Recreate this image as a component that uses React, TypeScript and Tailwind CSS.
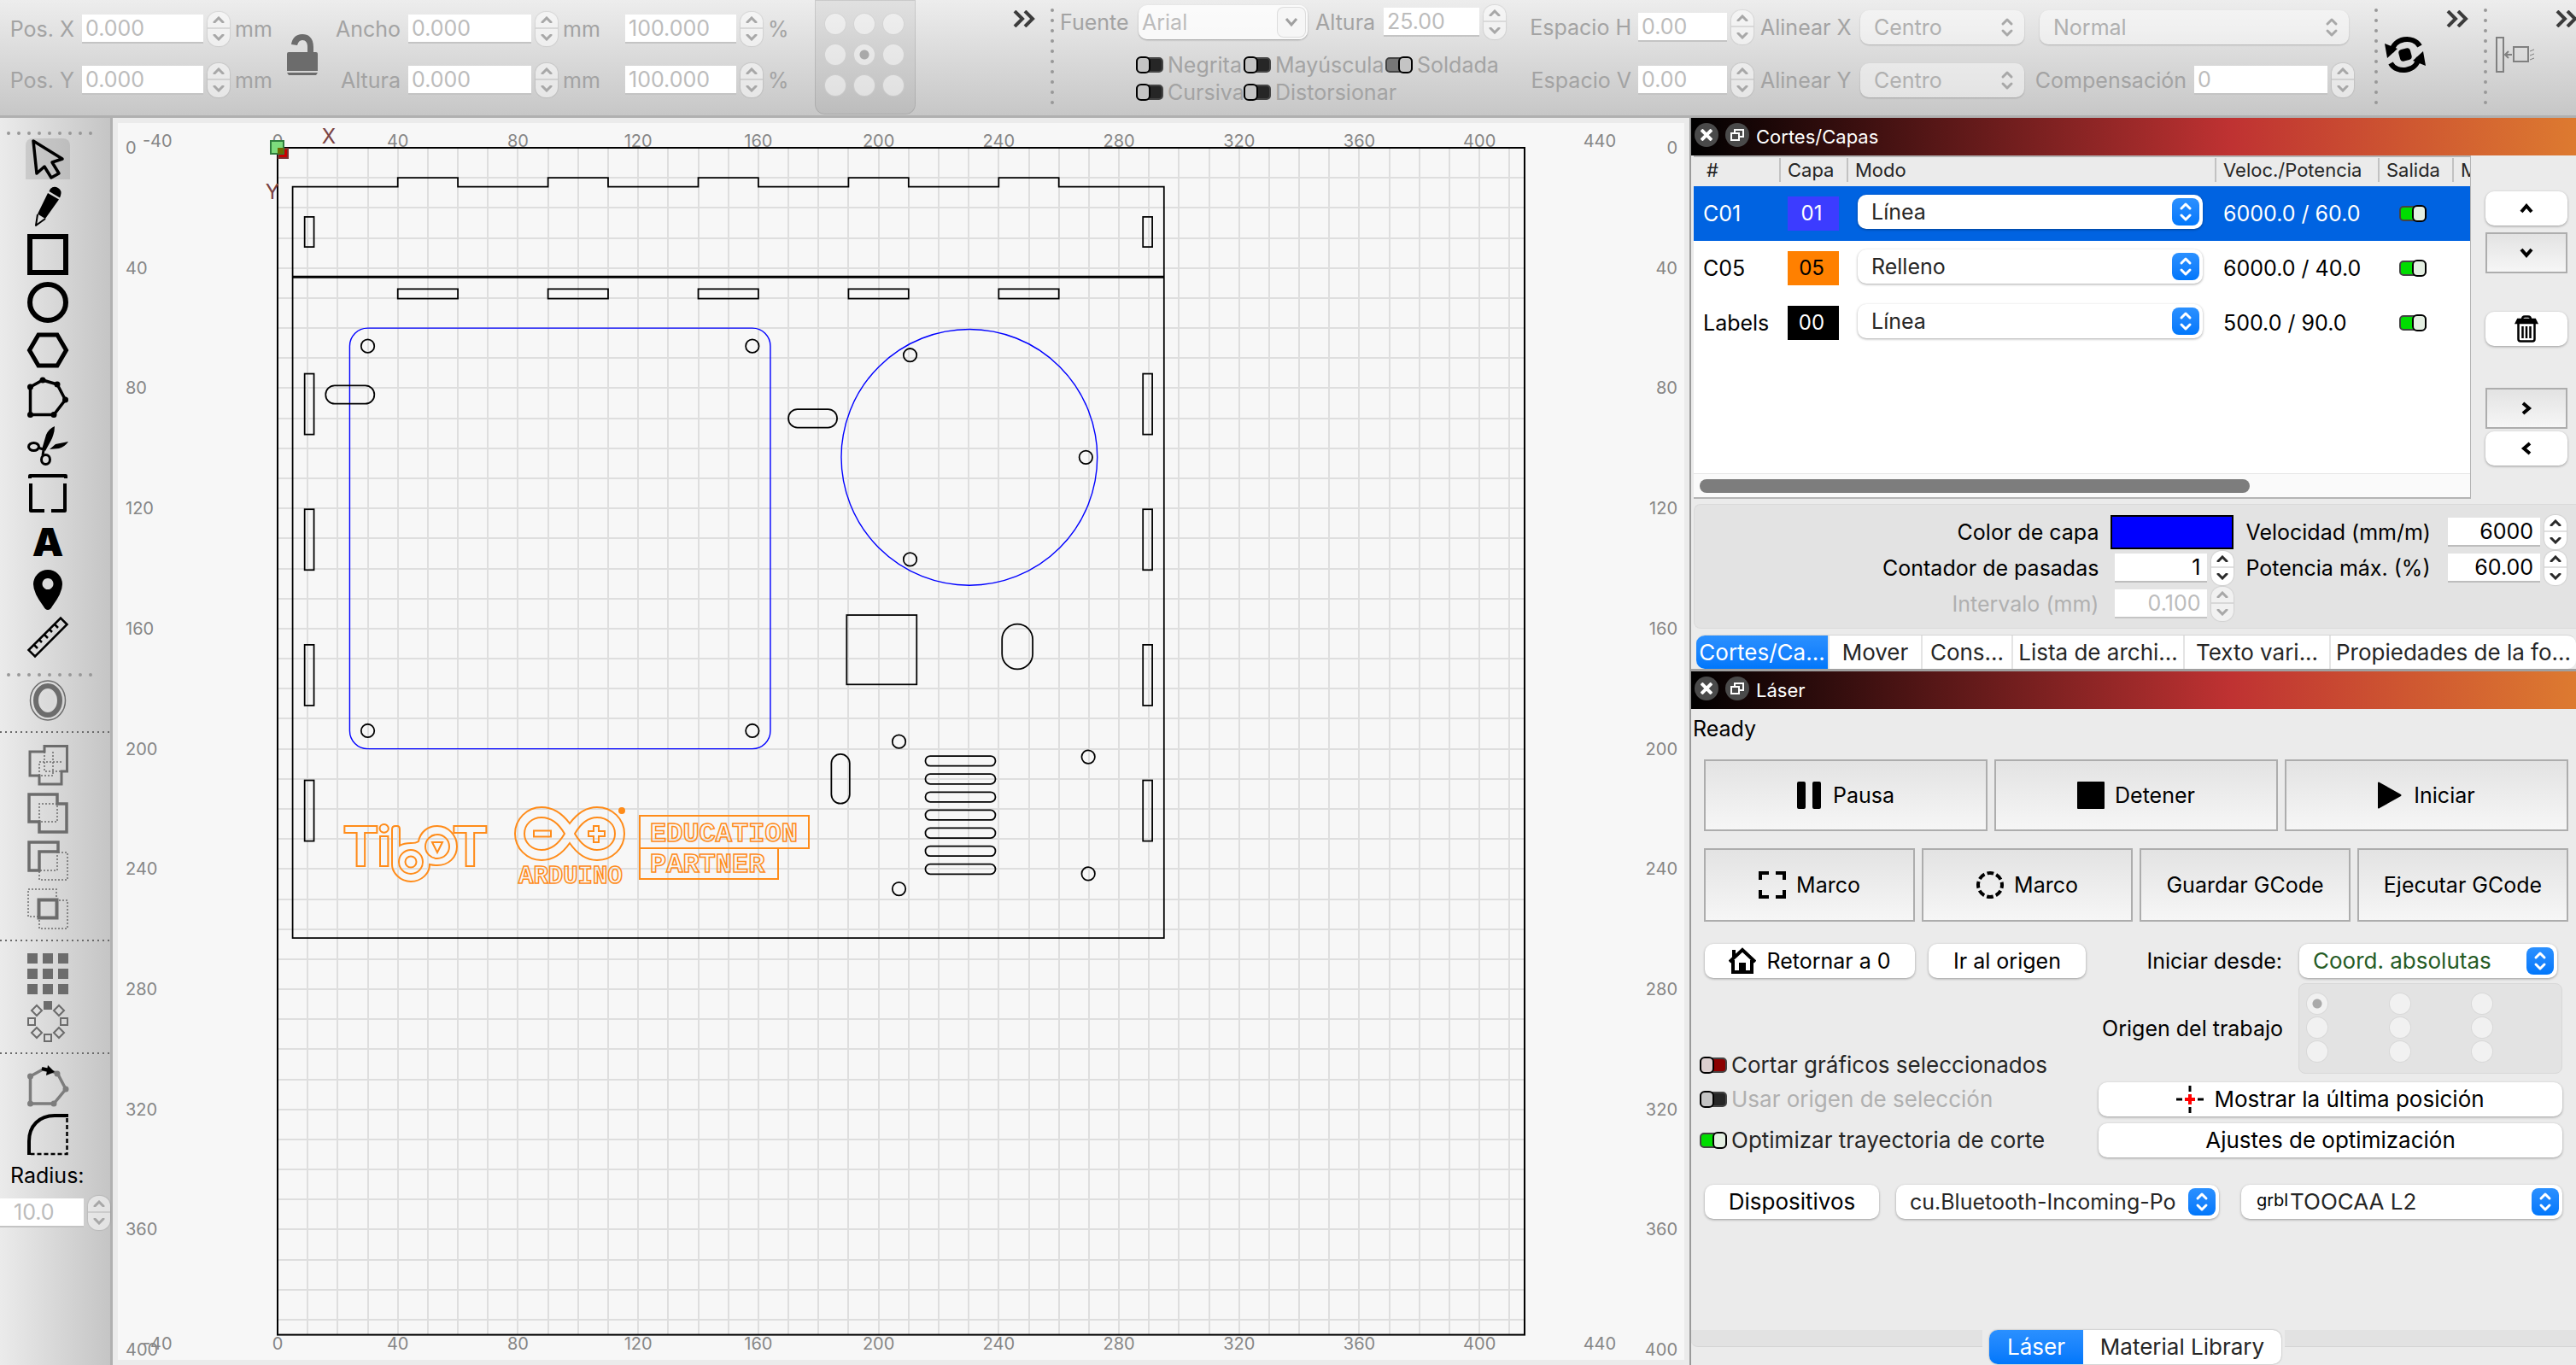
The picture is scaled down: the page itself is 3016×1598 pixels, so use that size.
import { useState } from 'react';
import type { ReactNode } from 'react';
import { clsx } from 'clsx';

interface Layer {
  id: string;
  code: string;
  swatch: string;
  mode: string;
  power: string;
}

const layers: Layer[] = [
  { id: 'C01', code: '01', swatch: 'bg-[#3c3cff] text-white', mode: 'Línea', power: '6000.0 / 60.0' },
  { id: 'C05', code: '05', swatch: 'bg-[#ff8000] text-black', mode: 'Relleno', power: '6000.0 / 40.0' },
  { id: 'Labels', code: '00', swatch: 'bg-black text-white', mode: 'Línea', power: '500.0 / 90.0' },
];

/* ---------- Small controls ---------- */

function Stepper({ disabled = false }: { disabled?: boolean }) {
  return (
    <span
      className={clsx(
        'flex h-10 w-[26px] shrink-0 flex-col divide-y-2 overflow-hidden rounded-xl shadow-[0_0_1px_1px_rgba(0,0,0,0.08)]',
        disabled ? 'divide-black/10 bg-white/50 text-[#a8a8a8]' : 'divide-[#e0e0e0] bg-white text-[#2b2b2b]'
      )}
    >
      <button type="button" aria-label="Subir" disabled={disabled} className="flex h-5 items-center justify-center">
        <svg className="h-2 w-3.5" viewBox="0 0 14 8" fill="none" stroke="currentColor" strokeWidth="3" strokeLinecap="round">
          <path d="M2 7 L7 2 L12 7" />
        </svg>
      </button>
      <button type="button" aria-label="Bajar" disabled={disabled} className="flex h-5 items-center justify-center">
        <svg className="h-2 w-3.5" viewBox="0 0 14 8" fill="none" stroke="currentColor" strokeWidth="3" strokeLinecap="round">
          <path d="M2 1 L7 6 L12 1" />
        </svg>
      </button>
    </span>
  );
}

interface NumberBoxProps {
  id?: string;
  name?: string;
  value: string;
  width: string;
  align?: string;
  disabled?: boolean;
}

function NumberBox({ id, name, value, width, align = 'pl-1', disabled = false }: NumberBoxProps) {
  return (
    <span className="flex shrink-0 items-center gap-[5px]">
      <input
        id={id}
        aria-label={name}
        defaultValue={value}
        disabled={disabled}
        className={clsx(
          'h-[34px] border-b-2 bg-white outline-none',
          disabled ? 'border-[#c4c4c4] text-[#bcbcbc]' : 'border-[#bdbdbd] text-black',
          width,
          align
        )}
      />
      <Stepper disabled={disabled} />
    </span>
  );
}

interface PopupProps {
  id?: string;
  name?: string;
  options: string[];
  width: string;
  tone?: string;
  pad?: string;
  disabled?: boolean;
}

function Popup({ id, name, options, width, tone = 'text-[#262626]', pad = 'pl-4 pr-10', disabled = false }: PopupProps) {
  return (
    <span className={clsx('relative block h-10 shrink-0', width)}>
      <select
        id={id}
        aria-label={name}
        disabled={disabled}
        className={clsx(
          'h-10 w-full appearance-none rounded-[10px] opacity-100 outline-none',
          disabled ? 'bg-white/45 text-[#b0b0b0] shadow-[0_1px_2px_rgba(0,0,0,0.2)]' : 'bg-white shadow-[0_1px_3px_rgba(0,0,0,0.35)]',
          !disabled && tone,
          pad
        )}
      >
        {options.map((o) => (
          <option key={o}>{o}</option>
        ))}
      </select>
      <span
        className={clsx(
          'pointer-events-none absolute top-1 right-1 flex h-8 w-8 items-center justify-center rounded-lg',
          disabled ? 'text-[#a8a8a8]' : 'bg-linear-to-b from-[#2a90ff] to-[#0077fb] text-white'
        )}
      >
        <svg className="h-6 w-4" viewBox="0 0 16 24" fill="none" stroke="currentColor" strokeWidth="3" strokeLinecap="round" strokeLinejoin="round">
          <path d="M3 8 L8 3 L13 8 M3 16 L8 21 L13 16" />
        </svg>
      </span>
    </span>
  );
}

function Toggle({ on = false, color }: { on?: boolean; color: string }) {
  return (
    <svg className="h-5 w-8 shrink-0" viewBox="0 0 32 20">
      <rect x="1" y="2" width="30" height="16" rx="4" fill={color} stroke="#444" strokeWidth="2" />
      <rect x={on ? 16 : 1} y="1" width="15" height="18" rx="5" fill={color === '#00dd00' ? '#e4efe2' : color === '#8b0000' ? '#dccfcf' : '#c4c4c4'} stroke="#000" strokeWidth="2" />
    </svg>
  );
}

interface SwitchProps {
  label: string;
  on?: boolean;
  color?: string;
  tone?: string;
  disabled?: boolean;
}

function Switch({ label, on = false, color = '#262626', tone = 'text-[#a3a3a3]', disabled = false }: SwitchProps) {
  return (
    <label className={clsx('flex items-center gap-[5px] overflow-hidden whitespace-nowrap leading-8', tone)}>
      <input type="checkbox" className="sr-only" defaultChecked={on} disabled={disabled} />
      <Toggle on={on} color={color} />
      {label}
    </label>
  );
}

function RadioGrid({ name, selected, className }: { name: string; selected: number; className: string }) {
  return (
    <div className={clsx('grid grid-cols-3', className)}>
      {Array.from({ length: 9 }, (_, i) => (
        <input
          key={i}
          type="radio"
          name={name}
          aria-label={`${name} ${i + 1}`}
          defaultChecked={i === selected}
          disabled
          className="h-[26px] w-[26px] appearance-none rounded-full border border-black/10 bg-white/50 checked:bg-[radial-gradient(circle,#a9a9a9_5px,transparent_6px)]"
        />
      ))}
    </div>
  );
}

function WhiteButton({ className, children, label }: { className: string; children: ReactNode; label?: string }) {
  return (
    <button
      type="button"
      aria-label={label}
      className={clsx('flex h-10 shrink-0 items-center justify-center rounded-[10px] bg-white whitespace-nowrap text-black shadow-[0_1px_3px_rgba(0,0,0,0.35)]', className)}
    >
      {children}
    </button>
  );
}

function BevelButton({ className, children, label }: { className?: string; children: ReactNode; label?: string }) {
  return (
    <button
      type="button"
      aria-label={label}
      className={clsx('flex items-center justify-center border-2 border-[#adadad] bg-linear-to-b from-[#e3e3e3] to-[#f6f6f6] whitespace-nowrap text-black', className)}
    >
      {children}
    </button>
  );
}

function Chevron({ d }: { d: string }) {
  return (
    <svg className="h-5 w-5" viewBox="0 0 20 20" fill="none" stroke="#000" strokeWidth="4">
      <path d={d} />
    </svg>
  );
}

function Overflow({ className }: { className?: string }) {
  return (
    <button type="button" aria-label="Más" className={clsx('h-5 w-7 shrink-0', className)}>
      <svg className="h-5 w-7" viewBox="0 0 28 20" fill="none" stroke="#3c3c3c" strokeWidth="4">
        <path d="M2 1 L11 10 L2 19 M14 1 L23 10 L14 19" />
      </svg>
    </button>
  );
}

function DotsV() {
  return (
    <svg className="mt-2 h-[120px] w-1 shrink-0" viewBox="0 0 4 120" stroke="#989898" strokeWidth="4" strokeLinecap="round">
      <path d="M2 4 V118" strokeDasharray="0 12" />
    </svg>
  );
}

/* ---------- Top toolbar ---------- */

function SizeRow({ pos, size }: { pos: string; size: string }) {
  return (
    <>
      <label htmlFor={pos} className="w-[76px] text-right">{pos}</label>
      <NumberBox id={pos} value="0.000" width="ml-[9px] w-[142px]" disabled />
      <span className="ml-1.5 w-[43px]">mm</span>
      <label htmlFor={size} className="ml-[61px] w-[90px] text-right">{size}</label>
      <NumberBox id={size} value="0.000" width="ml-[9px] w-[144px]" disabled />
      <span className="ml-1.5 w-[43px]">mm</span>
      <NumberBox name={`${size} %`} value="100.000" width="ml-[30px] w-[130px]" disabled />
      <span className="ml-1.5 w-[22px]">%</span>
    </>
  );
}

function TopBar() {
  return (
    <header className="flex h-[138px] shrink-0 items-start overflow-hidden border-b-3 border-[#b0b0b0] bg-linear-to-b from-[#ededed] to-[#c7c7c7] whitespace-nowrap text-[#a3a3a3]">
      <div className="relative flex shrink-0 flex-col gap-5 pt-3.5 pl-[11px]">
        <div className="flex h-10 items-center"><SizeRow pos="Pos. X" size="Ancho" /></div>
        <div className="flex h-10 items-center"><SizeRow pos="Pos. Y" size="Altura" /></div>
        <svg className="absolute top-10 left-[336px] h-12 w-9" viewBox="0 0 36 48" fill="#6c6c6c">
          <path d="M31 24 V15 C31 4 25 0 18 0 C10 0 6 5 5 12 L12 13 C13 9 15 7 18 7 C22 7 24 10 24 15 V24 Z" />
          <path d="M2 21 H34 Q36 21 36 23 V43 H0 V23 Q0 21 2 21 Z M0 45 H36 L34 48 H2 Z" />
        </svg>
      </div>
      <div className="ml-[33px] h-[134px] w-[118px] shrink-0 rounded-b-xl border border-black/10 bg-black/5 pt-3.5 pl-2.5">
        <RadioGrid name="Ancla" selected={4} className="w-[102px] gap-y-2.5" />
      </div>
      <Overflow className="mt-3 ml-[114px]" />
      <div className="ml-4"><DotsV /></div>

      <div className="ml-[7px] w-[522px] shrink-0 pt-1.5">
        <div className="flex h-10 items-center">
          <label htmlFor="fuente" className="w-[82px]">Fuente</label>
          <span className="relative ml-2.5 block h-10 w-[198px]">
            <input id="fuente" defaultValue="Arial" disabled className="h-10 w-full rounded-[10px] bg-white/80 pl-1 text-[#bcbcbc] shadow-[0_1px_2px_rgba(0,0,0,0.3)]" />
            <span className="absolute top-0.5 right-0.5 flex h-9 w-[34px] items-center justify-center rounded-lg border border-black/10 bg-[#f6f6f6]">
              <svg className="h-3 w-4" viewBox="0 0 16 12" fill="none" stroke="#a0a0a0" strokeWidth="3">
                <path d="M2 2 L8 9 L14 2" />
              </svg>
            </span>
          </span>
          <label htmlFor="altura-texto" className="ml-[9px] w-[72px]">Altura</label>
          <NumberBox id="altura-texto" value="25.00" width="ml-2 w-[112px]" disabled />
        </div>
        <div className="mt-3.5 ml-[89px] grid grid-cols-[126px_166px_140px]">
          <Switch label="Negrita" disabled />
          <Switch label="Mayúscula" disabled />
          <Switch label="Soldada" on color="#777777" disabled />
          <Switch label="Cursiva" disabled />
          <div className="col-span-2">
            <Switch label="Distorsionar" disabled />
          </div>
        </div>
      </div>

      <div className="ml-[27px] flex shrink-0 flex-col gap-[22px] pt-3">
        <div className="flex h-10 items-center">
          <label htmlFor="esp-h" className="w-[120px] text-right">Espacio H</label>
          <NumberBox id="esp-h" value="0.00" width="ml-2 w-[104px]" disabled />
          <label htmlFor="alin-x" className="ml-2 w-[107px]">Alinear X</label>
          <Popup id="alin-x" options={['Centro']} width="ml-2.5 w-48" disabled />
          <Popup name="Estilo" options={['Normal']} width="ml-[18px] w-[362px]" disabled />
        </div>
        <div className="flex h-10 items-center">
          <label htmlFor="esp-v" className="w-[120px] text-right">Espacio V</label>
          <NumberBox id="esp-v" value="0.00" width="ml-2 w-[104px]" disabled />
          <label htmlFor="alin-y" className="ml-2 w-[107px]">Alinear Y</label>
          <Popup id="alin-y" options={['Centro']} width="ml-2.5 w-48" disabled />
          <label htmlFor="comp" className="ml-3 w-[178px] text-right">Compensación</label>
          <NumberBox id="comp" value="0" width="ml-[9px] w-[156px]" disabled />
        </div>
      </div>

      <div className="ml-6"><DotsV /></div>
      <button type="button" aria-label="Actualizar" className="mt-10 ml-2 shrink-0">
        <svg className="h-12 w-12" viewBox="0 0 48 48" fill="none" stroke="#000" strokeWidth="6">
          <path d="M8 21 C10 4 34 1 41 14" />
          <path d="M40 27 C38 44 14 47 7 34" />
          <path d="M0 11 L15 17 L3 28 Z M48 37 L33 31 L45 20 Z" fill="#000" stroke="none" />
          <rect x="17" y="17" width="14" height="14" rx="4" fill="#000" stroke="none" transform="rotate(-15 24 24)" />
        </svg>
      </button>
      <Overflow className="mt-3 ml-6" />
      <div className="ml-4"><DotsV /></div>
      <button type="button" aria-label="Alinear" disabled className="mt-10 ml-2 shrink-0">
        <svg className="h-12 w-12" viewBox="0 0 48 48" fill="none" stroke="#808080" strokeWidth="2">
          <rect x="3" y="4" width="8" height="40" />
          <rect x="23" y="15" width="17" height="17" />
          <path d="M21 24 H13 M17 20 L13 24 L17 28" />
          <path d="M42 20 l5 -2 M42 25 l5 -2 M42 30 l5 -2" strokeWidth="1" />
        </svg>
      </button>
      <Overflow className="mt-3 ml-6" />
    </header>
  );
}

/* ---------- Left tool palette ---------- */

function Tool({ label, children, active = false }: { label: string; children: ReactNode; active?: boolean }) {
  return (
    <button
      type="button"
      aria-label={label}
      className={clsx('ml-[30px] flex h-12 w-[52px] shrink-0 items-center justify-center', active && 'rounded-t-lg bg-black/10')}
    >
      <svg className="h-12 w-12 overflow-visible" viewBox="0 0 48 48" fill="none" stroke="currentColor" strokeWidth="4">
        {children}
      </svg>
    </button>
  );
}

function DotsH() {
  return (
    <svg className="ml-2 h-1 w-[104px] shrink-0" viewBox="0 0 104 4" stroke="#989898" strokeWidth="4" strokeLinecap="round">
      <path d="M2 2 H100" strokeDasharray="0 12" />
    </svg>
  );
}

function DashLine({ className }: { className: string }) {
  return <div className={clsx('h-0.5 w-full shrink-0 bg-[repeating-linear-gradient(90deg,#6a6a6a_0_2px,transparent_2px_6px)]', className)} />;
}

function ToolPalette() {
  return (
    <aside className="flex w-[132px] shrink-0 flex-col border-r-3 border-[#b0b0b0] bg-linear-to-r from-[#ebebeb] to-[#c5c5c5] pt-4 text-black">
      <DotsH />
      <div className="mt-1 flex flex-col gap-2">
        <Tool label="Seleccionar" active>
          <path d="M7 3 L11 41 L20 33 L28 46 L37 41 L29 28 L41 24 Z" strokeWidth="3.5" strokeLinejoin="round" />
        </Tool>
        <Tool label="Dibujar líneas">
          <path d="M24 8 L37 15.5 L21 38 L12 32.5 Z M25.5 6 L27 3 Q31 -1 36 2 Q41 5 39 11 L38 13.5 Z" fill="currentColor" stroke="none" />
          <path d="M12 33 L10 46 L21 38" strokeWidth="2" strokeLinejoin="round" />
        </Tool>
        <Tool label="Rectángulo"><rect x="3" y="3" width="42" height="42" strokeWidth="6" /></Tool>
        <Tool label="Elipse"><circle cx="24" cy="24" r="21" strokeWidth="6" /></Tool>
        <Tool label="Polígono"><path d="M2.5 24 L13 6 H35 L45.5 24 L35 42 H13 Z" strokeWidth="5" /></Tool>
        <Tool label="Editar nodos">
          <path d="M3.5 11 L18 3 L35 8 L44.5 26 L31 43.5 H3.5 Z" strokeWidth="3.5" />
          <g fill="currentColor" stroke="none">
            <circle cx="3.5" cy="11" r="3.5" /><circle cx="18" cy="3" r="3.5" /><circle cx="35" cy="8" r="3.5" />
            <circle cx="44.5" cy="26" r="3.5" /><circle cx="31" cy="43.5" r="3.5" /><circle cx="3.5" cy="43.5" r="3.5" />
          </g>
        </Tool>
        <Tool label="Recortar">
          <ellipse cx="7.5" cy="25" rx="6" ry="4.5" strokeWidth="3" />
          <ellipse cx="21.5" cy="40" rx="5" ry="5.5" strokeWidth="3" />
          <path d="M12 26 L19 28 M18 35 L19 29" strokeWidth="3" />
          <path d="M17 28 L22 11 Q25 4 32 1 Q32 10 27 19 L21 30 Z M26 28 L33 22 L48 19 Q44 25 37 27 Z" fill="currentColor" stroke="none" />
        </Tool>
        <Tool label="Pestañas"><path d="M3 6 V3 H45 V6 M4 12 V44 H20 M28 44 H44 V12" strokeWidth="4" strokeLinejoin="round" /></Tool>
        <Tool label="Texto">
          <text x="24" y="41" textAnchor="middle" className="text-[46px] font-black" fill="currentColor" stroke="none">A</text>
        </Tool>
        <Tool label="Marcador">
          <path d="M24 48 Q21 48 19 44 Q7 28 7 18 A17 17 0 0 1 41 18 Q41 28 29 44 Q27 48 24 48 Z M24 11 a6.5 6.5 0 1 0 .01 0 Z" fill="currentColor" fillRule="evenodd" stroke="none" />
        </Tool>
        <Tool label="Medir">
          <path d="M1.5 39 L39 1.5 L46.5 9 L9 46.5 Z M8 33 l4 4 M14 27 l3 3 M20 21 l4 4 M26 15 l3 3 M32 9 l4 4" strokeWidth="2.5" />
        </Tool>
      </div>
      <div className="mt-4.5"><DotsH /></div>
      <div className="mt-1 flex flex-col text-[#6c6c6c]">
        <Tool label="Desfase">
          <ellipse cx="24" cy="24" rx="20.5" ry="23" strokeWidth="1.5" />
          <ellipse cx="24" cy="24" rx="14" ry="17" strokeWidth="6" />
          <ellipse cx="24" cy="24" rx="9" ry="11.5" strokeWidth="1" stroke="#e0e0e0" />
        </Tool>
        <DashLine className="mt-3" />
        <div className="mt-3.5 flex flex-col gap-2">
          <Tool label="Soldar">
            <path d="M3 8 H20 V1.5 H46.5 V31 H40 V46 H14 V36 H3 Z" strokeWidth="3" />
            <path d="M14 36 V20 H40 M20 8 V31 H46 M30 8 V36 H14" strokeWidth="1.5" strokeDasharray="2 2" />
          </Tool>
          <Tool label="Unión">
            <path d="M2 2 H35 V13 H46 V46 H14 V34 H2 Z" strokeWidth="3.5" />
            <path d="M14 34 V13 H35 V34 Z" strokeWidth="1.5" strokeDasharray="2 2" />
          </Tool>
          <Tool label="Restar">
            <path d="M2 2 H36 V13 H14 V35 H2 Z" strokeWidth="3.5" />
            <path d="M36 14 H47 V46 H14 V35 H35 V14" strokeWidth="1.5" strokeDasharray="2 2" />
          </Tool>
          <Tool label="Intersección">
            <rect x="13.5" y="13.5" width="21" height="21" strokeWidth="4" />
            <path d="M13 33 H1 V1 H34 V12 M37 14 H47 V47 H14 V36" strokeWidth="1.5" strokeDasharray="2 2" />
          </Tool>
        </div>
        <DashLine className="mt-3" />
        <div className="mt-3.5 flex flex-col gap-2">
          <Tool label="Matriz">
            <path d="M0 6 H48 M0 24 H48 M0 42 H48" strokeWidth="12" strokeDasharray="12 6" />
          </Tool>
          <Tool label="Matriz circular">
            <g strokeWidth="2">
              <rect x="20" y="1" width="8" height="8" fill="currentColor" />
              <rect x="1" y="20" width="8" height="8" />
              <rect x="39" y="20" width="8" height="8" />
              <rect x="20" y="39" width="8" height="8" />
              <path d="M11 5 l6 6 l-6 6 l-6 -6 Z M37 5 l6 6 l-6 6 l-6 -6 Z M11 31 l6 6 l-6 6 l-6 -6 Z M37 31 l6 6 l-6 6 l-6 -6 Z" />
            </g>
          </Tool>
        </div>
        <DashLine className="mt-3" />
        <div className="mt-3.5 flex flex-col gap-2">
          <Tool label="Punto inicial">
            <g stroke="#7d7d7d">
              <path d="M3.5 12 L18 4 L35 8 L45 27 L31 44 H3.5 Z" strokeWidth="3.5" />
              <path d="M3.5 12 v.1 M35 9 v.1 M45 27 v.1 M31 44 v.1 M3.5 44 v.1" strokeWidth="7" strokeLinecap="round" />
            </g>
            <path d="M17 3 L26 5" stroke="#000" strokeWidth="4" />
            <path d="M24 -1 L32 7 L22 11 Z" fill="#000" stroke="none" />
          </Tool>
          <Tool label="Redondear">
            <path d="M2 48 V32 C2 14 14 2 32 2 H48" stroke="#000" strokeWidth="4" />
            <path d="M46.5 5 V47 H4" stroke="#000" strokeWidth="2.5" strokeDasharray="5 3" />
          </Tool>
        </div>
      </div>
      <label htmlFor="radius" className="mt-2 ml-3 leading-8">Radius:</label>
      <div className="mt-2">
        <NumberBox id="radius" value="10.0" width="w-[98px]" align="pl-4" disabled />
      </div>
    </aside>
  );
}

/* ---------- Work area ---------- */

const SCALE = 3.518; // px per mm
const OX = 187;
const OY = 29;
const mx = (v: number) => OX + v * SCALE;
const my = (v: number) => OY + v * SCALE;

const ticksX = [-40, 0, 40, 80, 120, 160, 200, 240, 280, 320, 360, 400, 440];
const ticksY = [0, 40, 80, 120, 160, 200, 240, 280, 320, 360, 400];
const tabs = [40, 90, 140, 190, 240];
const holes = [
  [30, 66], [158, 66], [30, 194], [158, 194], [210.5, 69], [269, 103], [210.5, 137],
  [206.8, 197.6], [206.8, 246.6], [269.8, 202.7], [269.8, 241.6],
];

function Grid() {
  const cols = Array.from({ length: 41 }, (_, i) => (i + 1) * 10);
  const rows = Array.from({ length: 39 }, (_, i) => (i + 1) * 10);
  return (
    <g stroke="#dedede" strokeWidth="2" shapeRendering="crispEdges">
      {cols.map((v) => <line key={v} x1={mx(v)} x2={mx(v)} y1={my(0)} y2={my(395)} />)}
      {rows.map((v) => <line key={v} y1={my(v)} y2={my(v)} x1={mx(0)} x2={mx(415)} />)}
    </g>
  );
}

function Design() {
  const outline = tabs.map((t) => `H${t} V10 H${t + 20} V13`).join(' ');
  return (
    <g transform={`translate(${OX} ${OY}) scale(${SCALE})`} fill="none" stroke="#000" strokeWidth="0.5">
      <path d={`M5 13 ${outline} H295 V263 H5 Z`} />
      <path d="M5 43 H295" strokeWidth="0.9" />
      {tabs.map((t) => <rect key={t} x={t} y="47" width="20" height="3.2" />)}
      {[9, 288].map((x) => (
        <g key={x}>
          <rect x={x} y="23" width="3.1" height="10" />
          {[75.2, 120.3, 165.4, 210.5].map((y) => <rect key={y} x={x} y={y} width="3.1" height="20.2" />)}
        </g>
      ))}
      <g stroke="#0000ff" strokeWidth="0.4">
        <rect x="24" y="60" width="140" height="140" rx="6" />
        <circle cx="230.2" cy="103" r="42.6" />
      </g>
      {holes.map(([x, y]) => <circle key={`${x}-${y}`} cx={x} cy={y} r="2.2" />)}
      <rect x="16" y="79.1" width="16.2" height="6.1" rx="3" />
      <rect x="170" y="87" width="16.2" height="6.1" rx="3" />
      <rect x="189.4" y="155.5" width="23.3" height="23.1" />
      <rect x="241.1" y="158.5" width="10.2" height="15" rx="5.1" />
      <rect x="184.3" y="201.8" width="6.1" height="16.4" rx="3" />
      {[0, 1, 2, 3, 4, 5, 6].map((i) => <rect key={i} x="215.6" y={202.4 + i * 6} width="23.3" height="3.3" rx="1.6" />)}
    </g>
  );
}

function Logos() {
  return (
    <g fill="none" stroke="#ff8c1a" strokeWidth="2" transform="translate(242 776)">
      <g className="text-[64px] font-bold">
        <text x="21" y="94">T</text>
        <text x="61" y="94">i</text>
        <text x="149" y="94">T</text>
      </g>
      <path d="M79 92 V51 Q79 47 83 47 H85 Q88 47 88 51 V70 Q93 67 101 67 Q107 67 110 65 C112 54 121 47 132 47 C145 47 155 58 155 71 C155 84 145 93 132 93 Q127 93 123 92 C123 103 113 112 101 112 C89 112 79 102 79 92 Z" />
      <circle cx="101" cy="89" r="14" />
      <circle cx="101" cy="89" r="6.5" />
      <circle cx="132" cy="71" r="14" />
      <path d="M126 66 H138 L132 78 Z" />

      <path d="M287 44 C278 32 267 25 254 25 C237 25 223 39 223 56 C223 73 237 87 254 87 C267 87 278 80 287 67 C296 80 307 87 319 87 C337 87 351 73 351 56 C351 39 337 25 319 25 C307 25 296 32 287 44 Z" />
      <path d="M281 56 C274 44 265 37 254 37 C243 37 234 45 234 56 C234 67 243 75 254 75 C265 75 274 68 281 56 Z" />
      <path d="M293 56 C300 44 309 37 319 37 C331 37 340 45 340 56 C340 67 331 75 319 75 C309 75 300 68 293 56 Z" />
      <rect x="245" y="52.5" width="20" height="7" />
      <path d="M315 47 H321 V53 H328 V59 H321 V66 H315 V59 H309 V53 H315 Z" />
      <circle cx="348" cy="29" r="3" fill="#ff8c1a" />

      <path d="M369 35 H567 V73 H369 Z M369 73 H531 V109 H369 Z" />
      <g className="font-['Liberation_Mono'] text-[32px] font-bold" strokeWidth="1.5">
        <text x="381" y="65">EDUCATION</text>
        <text x="381" y="101">PARTNER</text>
        <text x="227" y="114" className="text-[29px]">ARDUINO</text>
      </g>
    </g>
  );
}

function WorkArea() {
  return (
    <main className="min-w-0 flex-1 bg-[#ebebeb] p-1.5">
      <svg className="h-full w-full bg-[#f7f7f7]" viewBox="0 0 1834 1448" preserveAspectRatio="xMinYMin slice">
        <Grid />
        <g className="text-[20px]" fill="#868686">
          {ticksX.map((t) => (
            <g key={t} textAnchor="middle">
              <text x={mx(t)} y="28">{t}</text>
              <text x={mx(t)} y="1436">{t}</text>
            </g>
          ))}
          {ticksY.map((t) => (
            <g key={t}>
              <text x="9" y={my(t) + 7}>{t}</text>
              <text x="1826" y={my(t) + 7} textAnchor="end">{t}</text>
            </g>
          ))}
        </g>
        <rect x={mx(0)} y={my(0)} width={415 * SCALE} height={395 * SCALE} fill="none" stroke="#000" strokeWidth="2" />
        <g className="text-[24px]" fill="#7a4343" textAnchor="middle">
          <text x="247" y="24">X</text>
          <text x="181" y="89">Y</text>
        </g>
        <rect x="188" y="30" width="11" height="11" fill="#c80000" stroke="#7c3030" strokeWidth="2" />
        <rect x="179" y="21" width="15" height="15" fill="#7ddc7d" stroke="#2f7d3e" strokeWidth="2" />
        <rect x="187" y="29" width="7" height="7" fill="#6b6b00" />
        <Design />
        <Logos />
      </svg>
    </main>
  );
}

/* ---------- Right docks ---------- */

function DockTitle({ title }: { title: string }) {
  return (
    <div className="flex h-11 shrink-0 items-center bg-[linear-gradient(90deg,#000_0%,#bf3232_61%,#dd7a30_100%)] pb-1 pl-1">
      <button type="button" aria-label={`Cerrar ${title}`} className="flex h-7 w-7 items-center justify-center rounded-full bg-[#4a4a4a]">
        <svg className="h-3.5 w-3.5" viewBox="0 0 14 14" stroke="#fff" strokeWidth="4">
          <path d="M1 1 L13 13 M13 1 L1 13" />
        </svg>
      </button>
      <button type="button" aria-label={`Separar ${title}`} className="ml-2 flex h-7 w-7 items-center justify-center rounded-full bg-[#4a4a4a]">
        <svg className="h-4 w-4" viewBox="0 0 16 16" fill="none" stroke="#fff" strokeWidth="2">
          <path d="M1 6 H10 V14 H1 Z M5 5 V2 H15 V10 H11" />
        </svg>
      </button>
      <h2 className="mt-1 ml-2 text-[22px] leading-7 text-white">{title}</h2>
    </div>
  );
}

function LayerTable() {
  const [selected, setSelected] = useState('C01');
  return (
    <div className="flex h-[402px] w-[910px] flex-col overflow-hidden border-t-2 border-r border-b-2 border-[#b4b4b4] bg-white">
      <table className="w-full table-fixed">
        <colgroup>
          <col className="w-[100px]" /><col className="w-[79px]" /><col className="w-[431px]" />
          <col className="w-[191px]" /><col className="w-[87px]" /><col className="w-[21px]" />
        </colgroup>
        <thead>
          <tr className="h-[34px] bg-[#ebebeb] text-left text-[22px] leading-7 whitespace-nowrap text-[#262626]">
            {['#', 'Capa', 'Modo', 'Veloc./Potencia', 'Salida', 'M'].map((h, i) => (
              <th key={h} className="overflow-hidden p-0 pb-1 font-normal">
                <span className={clsx('block', i === 0 ? 'pl-[15px]' : 'border-l-2 border-[#c2c2c2] pl-2')}>{h}</span>
              </th>
            ))}
          </tr>
        </thead>
        <tbody>
          {layers.map((l) => {
            const active = l.id === selected;
            return (
              <tr key={l.id} onClick={() => setSelected(l.id)} className={clsx('h-16 whitespace-nowrap', active ? 'bg-[#0063e1] text-white' : 'text-black')}>
                <td className="p-0 pl-[11px]">{l.id}</td>
                <td className="p-0 pl-2.5">
                  <span className={clsx('flex h-10 w-[60px] items-center justify-center pr-1 text-[24px]', l.swatch)}>{l.code}</span>
                </td>
                <td className="p-0 pb-1 pl-[13px]">
                  <Popup name={`Modo ${l.id}`} options={[l.mode]} width="w-[404px]" />
                </td>
                <td className="p-0 pl-2.5">{l.power}</td>
                <td className="p-0 pl-[25px]">
                  <label className="block">
                    <input type="checkbox" defaultChecked aria-label={`Salida ${l.id}`} className="sr-only" />
                    <Toggle on color="#00dd00" />
                  </label>
                </td>
                <td className="p-0" />
              </tr>
            );
          })}
        </tbody>
      </table>
      <div className="mt-auto flex h-7 items-center border-t border-[#e6e6e6] bg-[#fafafa] pl-[7px]">
        <div className="h-4 w-[644px] rounded-full bg-[#7d7d7d]" />
      </div>
    </div>
  );
}

function CutsDock() {
  return (
    <section className="flex shrink-0 flex-col">
      <DockTitle title="Cortes/Capas" />
      <div className="flex pl-[3px]">
        <LayerTable />
        <div className="ml-[17px] flex w-24 flex-col pt-[42px]">
          <WhiteButton label="Subir capa" className="w-24"><Chevron d="M4 14 L10 7 L16 14" /></WhiteButton>
          <BevelButton label="Bajar capa" className="mt-2 h-12"><Chevron d="M4 6 L10 13 L16 6" /></BevelButton>
          <WhiteButton label="Eliminar capa" className="mt-[45px] w-24">
            <svg className="h-8 w-7" viewBox="0 0 28 32" fill="none" stroke="#000" strokeWidth="2.5">
              <path d="M9 5 Q9 1.5 12 1.5 H16 Q19 1.5 19 5" />
              <path d="M2 9 L4 5 H24 L26 9 Z" fill="#000" />
              <path d="M4.5 10 V28 Q4.5 30.5 7 30.5 H21 Q23.5 30.5 23.5 28 V10 M9.5 13 V27 M14 13 V27 M18.5 13 V27" />
            </svg>
          </WhiteButton>
          <BevelButton label="Mover a la derecha" className="mt-[49px] h-12"><Chevron d="M6 4 L13 10 L6 16" /></BevelButton>
          <WhiteButton label="Mover a la izquierda" className="mt-[3px] w-24"><Chevron d="M14 4 L7 10 L14 16" /></WhiteButton>
        </div>
      </div>

      <div className="mt-1.5 ml-[3px] flex h-[146px] items-start justify-end gap-3.5 rounded-l-lg border border-r-0 border-[#dadada] bg-[#e3e3e3] pt-3 pr-[11px] whitespace-nowrap">
        <div className="grid grid-cols-[auto_144px] items-center justify-items-end gap-x-3.5 gap-y-0.5">
          <label htmlFor="color-capa">Color de capa</label>
          <button type="button" id="color-capa" aria-label="Color de capa" className="h-10 w-36 border-2 border-black bg-[#0000ff]" />
          <label htmlFor="pasadas">Contador de pasadas</label>
          <NumberBox id="pasadas" value="1" width="w-[108px]" align="pr-2 text-right" />
          <label htmlFor="intervalo" className="text-[#b0b0b0]">Intervalo (mm)</label>
          <NumberBox id="intervalo" value="0.100" width="w-[108px]" align="pr-2 text-right" disabled />
        </div>
        <div className="grid grid-cols-[auto_139px] items-center gap-x-5 gap-y-0.5">
          <label htmlFor="velocidad">Velocidad (mm/m)</label>
          <NumberBox id="velocidad" value="6000" width="w-[108px]" align="pr-2 text-right" />
          <label htmlFor="potencia">Potencia máx. (%)</label>
          <NumberBox id="potencia" value="60.00" width="w-[108px]" align="pr-2 text-right" />
        </div>
      </div>

      <nav className="mt-[7px] ml-1.5 flex h-10 divide-x-2 divide-[#e4e4e4] overflow-hidden rounded-[10px] border-t border-[#d4d4d4] bg-white text-[26px] whitespace-nowrap text-[#262626]">
        <button type="button" className="w-[156px] bg-linear-to-b from-[#2a90ff] to-[#0077fb] text-white">Cortes/Ca...</button>
        <button type="button" className="w-[109px]">Mover</button>
        <button type="button" className="w-[106px]">Cons...</button>
        <button type="button" className="w-[201px]">Lista de archi...</button>
        <button type="button" className="w-[171px]">Texto vari...</button>
        <button type="button" className="flex-1">Propiedades de la fo...</button>
      </nav>
    </section>
  );
}

function LaserDock() {
  return (
    <section className="flex min-h-0 flex-1 flex-col border-t-3 border-[#a0a0a0]">
      <DockTitle title="Láser" />
      <p className="mt-[7px] ml-0.5 leading-8">Ready</p>

      <div className="mr-[9px] ml-[15px]">
        <div className="mt-5 grid h-[84px] grid-cols-3 gap-2">
          <BevelButton>
            <svg className="mr-3.5 h-8 w-7" viewBox="0 0 28 32"><path d="M0 2 q0 -2 2 -2 h6 q2 0 2 2 v28 q0 2 -2 2 h-6 q-2 0 -2 -2 Z M18 2 q0 -2 2 -2 h6 q2 0 2 2 v28 q0 2 -2 2 h-6 q-2 0 -2 -2 Z" /></svg>
            Pausa
          </BevelButton>
          <BevelButton>
            <svg className="mr-3 h-8 w-8" viewBox="0 0 32 32"><rect width="32" height="32" rx="1" /></svg>
            Detener
          </BevelButton>
          <BevelButton>
            <svg className="mr-3.5 h-8 w-7" viewBox="0 0 28 32"><path d="M0 1 Q1 0 2 1 L27 15 Q28 16 27 17 L2 31 Q1 32 0 31 Z" /></svg>
            Iniciar
          </BevelButton>
        </div>
        <div className="mt-5 grid h-[86px] grid-cols-4 gap-2">
          <BevelButton>
            <svg className="mr-3 h-8 w-8" viewBox="0 0 32 32" fill="none" stroke="#000" strokeWidth="4">
              <path d="M2 10 V2 H12 M20 2 H30 V10 M30 22 V30 H20 M12 30 H2 V22" />
            </svg>
            Marco
          </BevelButton>
          <BevelButton>
            <svg className="mr-3 h-8 w-8" viewBox="0 0 32 32" fill="none" stroke="#000" strokeWidth="4">
              <circle cx="16" cy="16" r="14" strokeDasharray="7.8 3.2" strokeDashoffset="4" />
            </svg>
            Marco
          </BevelButton>
          <BevelButton>Guardar GCode</BevelButton>
          <BevelButton>Ejecutar GCode</BevelButton>
        </div>
      </div>

      <div className="mt-[26px] ml-4 flex items-center whitespace-nowrap">
        <WhiteButton className="w-[246px]">
          <svg className="mr-3 h-8 w-8" viewBox="0 0 32 32" fill="none" stroke="#000" strokeWidth="4">
            <path d="M1 17 L16 3 L31 17" />
            <path d="M5 15 V29 H27 V15 M6 12 V3" />
            <path d="M13 30 V19 H19 V30 Z" fill="#000" strokeWidth="2" />
          </svg>
          Retornar a 0
        </WhiteButton>
        <WhiteButton className="ml-4 w-[184px]">Ir al origen</WhiteButton>
        <label htmlFor="inicio" className="w-[230px] text-right">Iniciar desde:</label>
        <Popup id="inicio" options={['Coord. absolutas']} width="ml-5 w-[302px] text-[26px]" tone="text-[#265c26]" />
      </div>

      <div className="mr-4 ml-2.5 grid grid-cols-[467px_1fr] text-[26px]">
        <div className="flex flex-col pt-[86px]">
          <Switch label="Cortar gráficos seleccionados" color="#8b0000" tone="text-[#262626]" />
          <div className="mt-2"><Switch label="Usar origen de selección" tone="text-[#b0b0b0]" disabled /></div>
          <div className="mt-4"><Switch label="Optimizar trayectoria de corte" on color="#00dd00" tone="text-[#262626]" /></div>
        </div>
        <div className="flex flex-col">
          <div className="mt-1.5 flex h-[106px] items-center text-[25px]">
            <span className="w-[216px] text-right">Origen del trabajo</span>
            <div className="ml-[18px] h-[106px] flex-1 rounded-lg border border-[#d8d8d8] bg-[#e3e3e3] pt-2.5 pl-2">
              <RadioGrid name="Origen" selected={0} className="w-[290px] gap-y-0.5" />
            </div>
          </div>
          <WhiteButton className="mt-2.5 w-full">
            <svg className="mr-3 h-8 w-8" viewBox="0 0 32 32" strokeWidth="3">
              <path d="M16 0 V7 M16 25 V32 M0 16 H7 M25 16 H32" stroke="#000" />
              <path d="M16 10 V22 M10 16 H22" stroke="#f00" strokeWidth="4" />
            </svg>
            Mostrar la última posición
          </WhiteButton>
          <WhiteButton className="mt-2 w-full">Ajustes de optimización</WhiteButton>
        </div>
      </div>

      <div className="mt-8 ml-4 flex items-center text-[26px]">
        <WhiteButton className="w-[204px]">Dispositivos</WhiteButton>
        <Popup name="Puerto" options={['cu.Bluetooth-Incoming-Po']} width="ml-5 w-[378px] text-[25px]" />
        <div className="relative ml-[26px]">
          <Popup name="Dispositivo" options={['TOOCAA L2']} width="w-[376px]" pad="pl-[57px] pr-10" />
          <span className="pointer-events-none absolute top-0.5 left-[18px] text-[20px] leading-8">grbl</span>
        </div>
      </div>

      <div className="mt-auto flex h-[41px] items-start">
        <div className="h-5 flex-1 rounded-bl-lg border-b border-[#d4d4d4] bg-[#e2e2e2]" />
        <nav className="mr-1 ml-2 flex h-10 overflow-hidden rounded-[10px] bg-white text-[26px] whitespace-nowrap text-[#262626] shadow-[0_0_2px_rgba(0,0,0,0.35)]">
          <button type="button" className="w-[110px] bg-linear-to-b from-[#2a90ff] to-[#0077fb] text-white">Láser</button>
          <button type="button" className="w-[232px]">Material Library</button>
        </nav>
        <div className="h-5 flex-1 border-b border-[#d4d4d4] bg-[#e2e2e2]" />
      </div>
    </section>
  );
}

export default function App() {
  return (
    <div className="flex h-screen w-full flex-col overflow-hidden bg-[#ebebeb] font-['Inter',sans-serif] text-[25px] leading-8 text-black">
      <TopBar />
      <div className="flex min-h-0 flex-1">
        <ToolPalette />
        <WorkArea />
        <div className="flex w-[1038px] shrink-0 flex-col border-l-2 border-[#9a9a9a]">
          <CutsDock />
          <LaserDock />
        </div>
      </div>
    </div>
  );
}
